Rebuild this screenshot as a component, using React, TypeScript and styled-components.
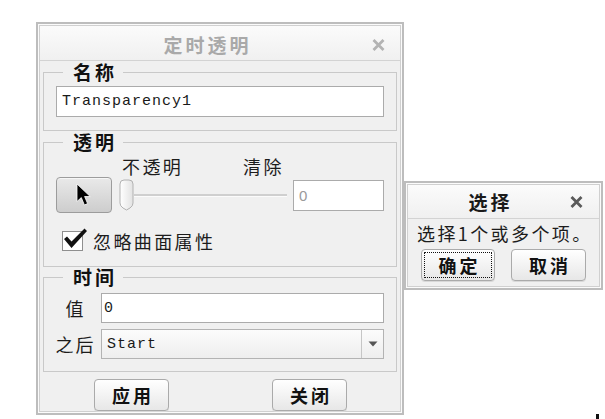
import React from "react";
import styled, { createGlobalStyle } from "styled-components";

const GlobalStyle = createGlobalStyle`
  html, body { margin: 0; padding: 0; background: #ffffff; }
  body { font-family: "Noto Sans CJK SC", "Noto Sans", sans-serif; color: #141414; }
  * { box-sizing: border-box; }
`;

const CJK = `"Noto Sans CJK SC", "Noto Sans", sans-serif`;
const MONO = `"Liberation Mono", "DejaVu Sans Mono", monospace`;

const Desktop = styled.div`
  position: relative;
  width: 605px;
  height: 419px;
  overflow: hidden;
  display: flex;
  align-items: flex-start;
  padding: 22px 0 0 36px;
`;

const Dialog = styled.div<{ $width: number; $height: number; $top?: number }>`
  flex: none;
  width: ${(p) => p.$width}px;
  height: ${(p) => p.$height}px;
  margin-top: ${(p) => p.$top ?? 0}px;
  border: 2px solid #bdbdbd;
  padding: 1px;
  background: #fbfbfb;
`;

const Frame = styled.div`
  height: 100%;
  border: 1px solid #d0d0d0;
  background: #f0f0f0;
  display: flex;
  flex-direction: column;
`;

const TitleBar = styled.div<{ $height: number; $padTop: number }>`
  flex: none;
  height: ${(p) => p.$height}px;
  padding-top: ${(p) => p.$padTop}px;
  display: flex;
  align-items: center;
  background: linear-gradient(#fbfbfb, #f0f0f0);
  border-bottom: 1px solid #d3d3d3;
`;

const Title = styled.div<{ $color: string }>`
  flex: 1;
  text-align: center;
  font-family: ${CJK};
  font-weight: 700;
  font-size: 19px;
  line-height: 22px;
  letter-spacing: 3px;
  padding-left: 3px;
  color: ${(p) => p.$color};
`;

const Close = styled.div<{ $right: number }>`
  flex: none;
  width: 13px;
  height: 12px;
  margin-right: ${(p) => p.$right}px;
  display: flex;
`;

const Body = styled.div`
  display: flex;
  flex-direction: column;
  padding: 0 3px;
`;

const Group = styled.fieldset<{ $pt: number; $pb: number; $mt?: number }>`
  margin: ${(p) => p.$mt ?? 0}px 0 0 0;
  min-width: 0;
  border: 1px solid #c9c9c9;
  padding: ${(p) => p.$pt}px 12px ${(p) => p.$pb}px;
  display: flex;
  flex-direction: column;
`;

const GroupLegend = styled.legend`
  margin-left: 7px;
  padding: 0 6px 0 10px;
  font-family: ${CJK};
  font-weight: 700;
  font-size: 19px;
  line-height: 22px;
  letter-spacing: 3px;
  color: #111;
`;

const TextField = styled.input<{ $pad: number; $mono?: boolean; $muted?: boolean; $h?: number }>`
  display: block;
  width: 100%;
  height: ${(p) => p.$h ?? 31}px;
  margin: 0;
  border: 1px solid #ababab;
  border-radius: 0;
  background: #ffffff;
  padding: 0 0 0 ${(p) => p.$pad}px;
  outline: none;
  font-family: ${(p) => (p.$mono ? MONO : `"Liberation Sans", Arial, sans-serif`)};
  font-size: 15px;
  letter-spacing: ${(p) => (p.$mono ? 1 : 0)}px;
  color: ${(p) => (p.$muted ? "#9a9a9a" : "#1a1a1a")};
`;

const LabelRow = styled.div`
  display: grid;
  grid-template-columns: 66px 121px auto;
  height: 22px;
  margin-top: 1px;
`;

const Label = styled.span<{ $col?: number }>`
  grid-column: ${(p) => p.$col ?? "auto"};
  font-family: ${CJK};
  font-size: 18px;
  line-height: 22px;
  letter-spacing: 2.4px;
  color: #1c1c1c;
  white-space: nowrap;
`;

const ControlRow = styled.div`
  display: flex;
  align-items: center;
  height: 36px;
`;

const PickButton = styled.div`
  flex: none;
  width: 56px;
  height: 36px;
  border: 1px solid #9c9c9c;
  border-radius: 4px;
  background: linear-gradient(#e9e9e9, #cdcdcd);
  box-shadow: inset 0 1px 0 #f6f6f6;
  display: flex;
  align-items: center;
  justify-content: center;
`;

const Slider = styled.div`
  flex: none;
  width: 170px;
  height: 32px;
  margin-left: 7px;
  display: flex;
  align-items: center;
`;

const Track = styled.div`
  flex: 1;
  height: 2px;
  margin-right: 2px;
  background: #cfcfcf;
  box-shadow: 0 1px 0 #fbfbfb;
`;

const ValueBox = styled.div`
  flex: none;
  width: 91px;
  margin-left: 4px;
`;

const CheckRow = styled.div`
  display: flex;
  align-items: center;
  height: 28px;
  margin-top: 14px;
  padding-left: 6px;
  gap: 5px;
`;

const FormGrid = styled.div`
  display: grid;
  grid-template-columns: 37px 1fr;
  column-gap: 8px;
  row-gap: 6px;
  align-items: center;
`;

const FieldLabel = styled.span`
  justify-self: center;
  font-family: ${CJK};
  font-size: 18px;
  line-height: 22px;
  letter-spacing: 2px;
  padding-left: 2px;
  white-space: nowrap;
  color: #1c1c1c;
`;

const Select = styled.div`
  display: flex;
  height: 30px;
  border: 1px solid #b3b3b3;
  background: linear-gradient(#fcfcfc, #eeeeee);
`;

const SelectText = styled.div`
  flex: 1;
  padding-left: 5px;
  display: flex;
  align-items: center;
  font-family: ${MONO};
  font-size: 15px;
  letter-spacing: 1px;
  color: #1a1a1a;
`;

const SelectArrow = styled.div`
  flex: none;
  width: 22px;
  border-left: 1px solid #c6c6c6;
  display: flex;
  align-items: center;
  justify-content: center;
`;

const ButtonRow = styled.div<{ $mt: number; $pl: number; $gap: number }>`
  display: flex;
  margin-top: ${(p) => p.$mt}px;
  padding-left: ${(p) => p.$pl}px;
  gap: ${(p) => p.$gap}px;
`;

const Button = styled.div<{ $w: number; $focus?: boolean }>`
  flex: none;
  width: ${(p) => p.$w}px;
  height: 32px;
  border: 1px solid #aaaaaa;
  border-radius: 4px;
  background: linear-gradient(#ffffff, #e7e7e7);
  box-shadow: 0 1px 0 #d8d8d8;
  display: flex;
  align-items: center;
  justify-content: center;
  font-family: ${CJK};
  font-weight: 700;
  font-size: 18px;
  letter-spacing: 3px;
  padding-left: 3px;
  color: #111;
  outline: ${(p) => (p.$focus ? "1px dotted #111" : "none")};
  outline-offset: -4px;
`;

const Message = styled.div`
  margin-top: 3px;
  padding-left: 9px;
  font-family: ${CJK};
  font-size: 18px;
  line-height: 22px;
  letter-spacing: 2.4px;
  white-space: nowrap;
  color: #1c1c1c;
`;

const Speck = styled.div`
  position: absolute;
  left: 596px;
  top: 414px;
  width: 3px;
  height: 5px;
  background: #111;
`;

const CloseIcon = ({ color }: { color: string }) => (
  <svg width="13" height="12" viewBox="0 0 13 12">
    <path d="M1.5 1 L11.5 11 M11.5 1 L1.5 11" stroke={color} strokeWidth="2.8" fill="none" />
  </svg>
);

const CursorIcon = () => (
  <svg width="16" height="24" viewBox="0 0 16 24">
    <path
      d="M1 1 L1 18.5 L5.3 14.6 L8.4 22 L11.6 20.6 L8.6 13.5 L14.2 13.5 Z"
      fill="#000"
      stroke="#fff"
      strokeWidth="0.8"
      strokeLinejoin="round"
    />
  </svg>
);

const ThumbIcon = () => (
  <svg width="15" height="32" viewBox="0 0 15 32">
    <defs>
      <linearGradient id="thumbFill" x1="0" y1="0" x2="1" y2="0">
        <stop offset="0" stopColor="#ffffff" />
        <stop offset="1" stopColor="#e2e2e2" />
      </linearGradient>
    </defs>
    <path
      d="M1 5 Q1 1 5 1 L10 1 Q14 1 14 5 L14 24 Q14 27 11 29 L7.5 31 L4 29 Q1 27 1 24 Z"
      fill="url(#thumbFill)"
      stroke="#b2b2b2"
      strokeWidth="1"
    />
  </svg>
);

const CheckIcon = () => (
  <svg width="26" height="24" viewBox="0 0 26 24" style={{ overflow: "visible" }}>
    <rect x="0.5" y="2.5" width="20" height="19" fill="#ffffff" stroke="#8f8f8f" />
    <path d="M2 10 L5 7.5 L9.5 12.5 L22.5 -0.5 L25 2 L9.5 19 Z" fill="#111" />
  </svg>
);

const DropTriangle = () => (
  <svg width="10" height="6" viewBox="0 0 10 6">
    <path d="M0.5 0.5 L9.5 0.5 L5 5.5 Z" fill="#555" />
  </svg>
);

export default function App() {
  return (
    <>
      <GlobalStyle />
      <Desktop>
        <Dialog $width={368} $height={393}>
          <Frame>
            <TitleBar $height={35} $padTop={4}>
              <Title $color="#a9a9a9">定时透明</Title>
              <Close $right={15}>
                <CloseIcon color="#b3b3b3" />
              </Close>
            </TitleBar>
            <Body>
              <Group $pt={3} $pb={13}>
                <GroupLegend>名称</GroupLegend>
                <TextField $pad={5} $mono readOnly defaultValue="Transparency1" />
              </Group>
              <Group $pt={1} $pb={11}>
                <GroupLegend>透明</GroupLegend>
                <LabelRow>
                  <Label $col={2}>不透明</Label>
                  <Label $col={3}>清除</Label>
                </LabelRow>
                <ControlRow>
                  <PickButton>
                    <CursorIcon />
                  </PickButton>
                  <Slider>
                    <ThumbIcon />
                    <Track />
                  </Slider>
                  <ValueBox>
                    <TextField $pad={5} $muted readOnly defaultValue="0" />
                  </ValueBox>
                </ControlRow>
                <CheckRow>
                  <CheckIcon />
                  <Label>忽略曲面属性</Label>
                </CheckRow>
              </Group>
              <Group $pt={5} $pb={12} $mt={-1}>
                <GroupLegend>时间</GroupLegend>
                <FormGrid>
                  <FieldLabel>值</FieldLabel>
                  <TextField $pad={2} $mono $h={30} readOnly defaultValue="0" />
                  <FieldLabel>之后</FieldLabel>
                  <Select>
                    <SelectText>Start</SelectText>
                    <SelectArrow>
                      <DropTriangle />
                    </SelectArrow>
                  </Select>
                </FormGrid>
              </Group>
            </Body>
            <ButtonRow $mt={7} $pl={54} $gap={103}>
              <Button $w={75}>应用</Button>
              <Button $w={75}>关闭</Button>
            </ButtonRow>
          </Frame>
        </Dialog>
        <Dialog $width={199} $height={109} $top={159}>
          <Frame>
            <TitleBar $height={34} $padTop={1}>
              <Title $color="#1a1a1a">选择</Title>
              <Close $right={16}>
                <CloseIcon color="#5a5a5a" />
              </Close>
            </TitleBar>
            <Message>选择1个或多个项。</Message>
            <ButtonRow $mt={5} $pl={13} $gap={16}>
              <Button $w={74} $focus>确定</Button>
              <Button $w={75}>取消</Button>
            </ButtonRow>
          </Frame>
        </Dialog>
        <Speck />
      </Desktop>
    </>
  );
}
